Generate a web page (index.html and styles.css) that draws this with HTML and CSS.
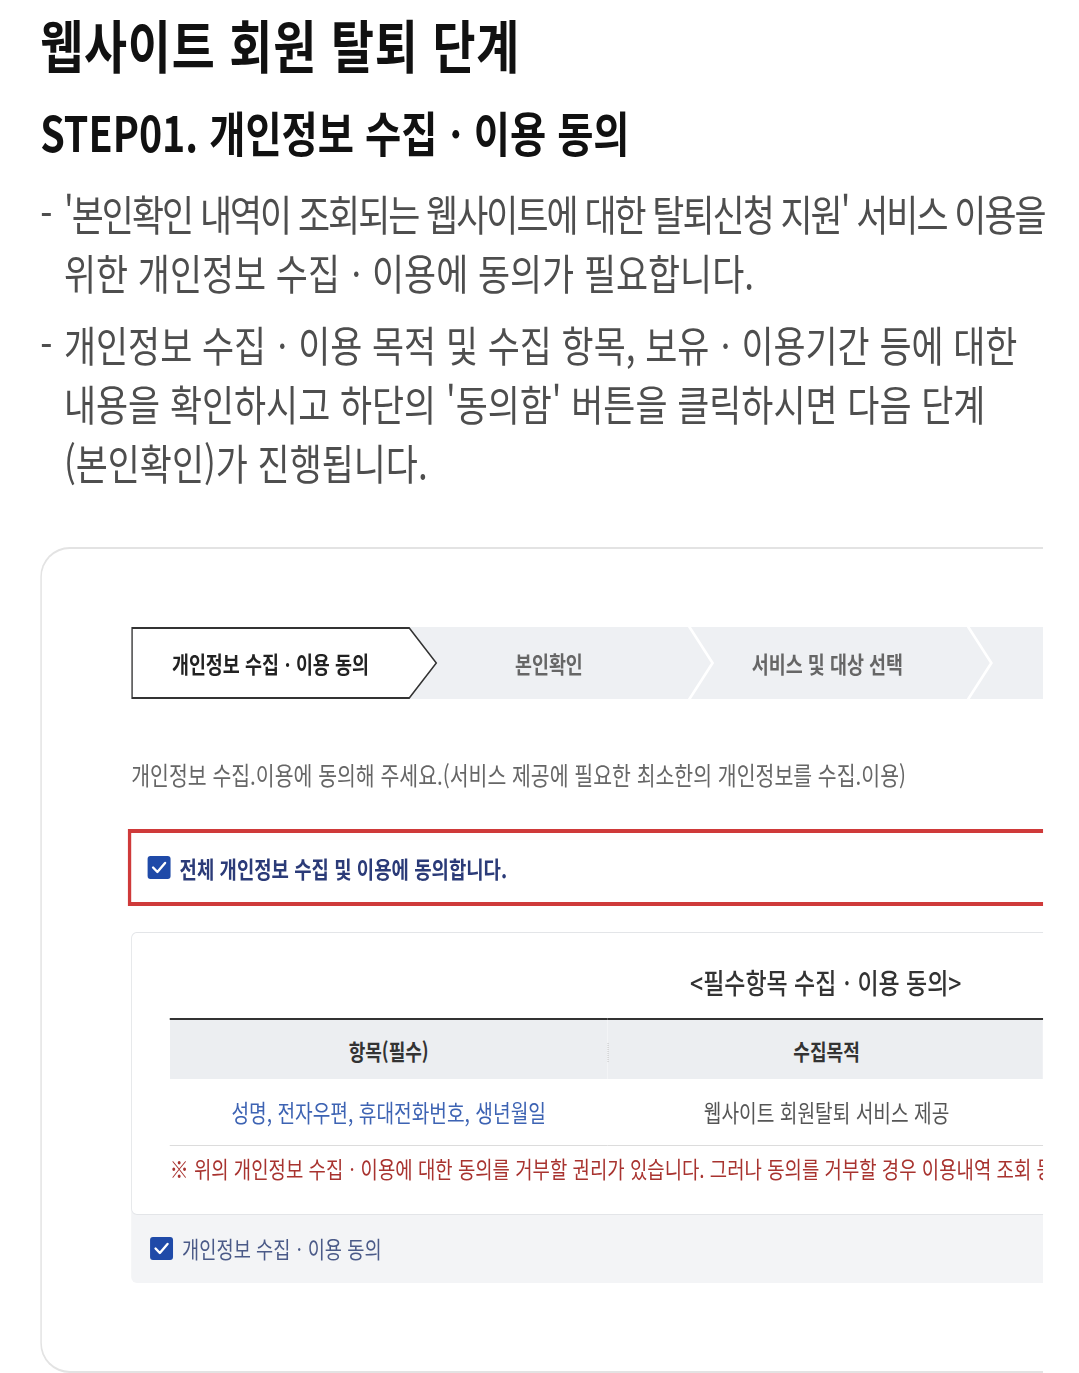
FILE: index.html
```html
<!DOCTYPE html>
<html lang="ko">
<head>
<meta charset="utf-8">
<title>웹사이트 회원 탈퇴 단계</title>
<link rel="stylesheet" href="styles.css">
</head>
<body>
<div class="viewport">
  <main class="page">
    <h1 class="title">웹사이트 회원 탈퇴 단계</h1>
    <h2 class="step-title">STEP01. 개인정보 수집ㆍ이용 동의</h2>
    <ul class="notes">
      <li><span class="dash">-</span><p><span class="tight">'본인확인 내역이 조회되는 웹사이트에 대한 탈퇴신청 지원' 서비스 이용을</span><br>위한 개인정보 수집ㆍ이용에 동의가 필요합니다.</p></li>
      <li><span class="dash">-</span><p>개인정보 수집ㆍ이용 목적 및 수집 항목, 보유ㆍ이용기간 등에 대한<br>내용을 확인하시고 하단의 '동의함' 버튼을 클릭하시면 다음 단계<br>(본인확인)가 진행됩니다.</p></li>
    </ul>

    <section class="shot">
      <div class="shot-inner">
        <ol class="steps">
          <li class="step active">
            <svg class="step-shape" width="374" height="72" viewBox="0 0 374 72"><path d="M1 1 H339 L372 36 L339 71 H1 Z" fill="#fff" stroke="#333" stroke-width="1.8"/></svg>
            <span>개인정보 수집ㆍ이용 동의</span>
          </li>
          <li class="step">
            <span>본인확인</span>
            <svg class="chev" width="32" height="72" viewBox="0 0 32 72"><polyline points="1,-1 30,36 1,73" fill="none" stroke="#fff" stroke-width="3"/></svg>
          </li>
          <li class="step">
            <span>서비스 및 대상 선택</span>
            <svg class="chev" width="32" height="72" viewBox="0 0 32 72"><polyline points="1,-1 30,36 1,73" fill="none" stroke="#fff" stroke-width="3"/></svg>
          </li>
          <li class="step"></li>
        </ol>

        <p class="guide">개인정보 수집.이용에 동의해 주세요.(서비스 제공에 필요한 최소한의 개인정보를 수집.이용)</p>

        <label class="allcheck">
          <span class="box"><svg width="28" height="23" viewBox="0 0 23 23" preserveAspectRatio="none"><polyline points="5.5,11.5 9.8,16 17.5,7" fill="none" stroke="#fff" stroke-width="2.4" stroke-linecap="round" stroke-linejoin="round"/></svg></span>
          <span class="allcheck-text">전체 개인정보 수집 및 이용에 동의합니다.</span>
        </label>

        <div class="consent">
          <div class="consent-card">
            <h3 class="consent-title">&lt;필수항목 수집ㆍ이용 동의&gt;</h3>
            <table class="consent-table">
              <thead>
                <tr><th>항목(필수)</th><th>수집목적</th></tr>
              </thead>
              <tbody>
                <tr><td class="items">성명, 전자우편, 휴대전화번호, 생년월일</td><td class="purpose">웹사이트 회원탈퇴 서비스 제공</td></tr>
              </tbody>
            </table>
            <p class="notice">※ 위의 개인정보 수집ㆍ이용에 대한 동의를 거부할 권리가 있습니다. 그러나 동의를 거부할 경우 이용내역 조회 등</p>
          </div>
          <label class="agree">
            <span class="box"><svg width="28" height="23" viewBox="0 0 23 23" preserveAspectRatio="none"><polyline points="5.5,11.5 9.8,16 17.5,7" fill="none" stroke="#fff" stroke-width="2.4" stroke-linecap="round" stroke-linejoin="round"/></svg></span>
            <span class="agree-text">개인정보 수집ㆍ이용 동의</span>
          </label>
        </div>
      </div>
    </section>
  </main>
</div>
</body>
</html>
```

FILE: styles.css
```css
* {
  box-sizing: border-box;
  margin: 0;
  padding: 0;
}

html, body {
  background: #fff;
}

body {
  font-family: "Noto Sans CJK KR", "Noto Sans", sans-serif;
  overflow: hidden;
}

.viewport {
  width: 1079px;
  height: 1373px;
  overflow: hidden;
}

/* the source capture is horizontally condensed */
.page {
  width: 1316px;
  transform: scaleX(0.82);
  transform-origin: 0 0;
  padding-left: 49px;
}

.title {
  font-size: 57px;
  font-weight: 700;
  line-height: 60px;
  letter-spacing: 1px;
  margin-top: 13px;
  color: #111;
}

.step-title {
  font-size: 48px;
  font-weight: 700;
  line-height: 60px;
  margin-top: 28px;
  color: #111;
}

.notes {
  list-style: none;
  margin-top: 22px;
  font-size: 42.5px;
  line-height: 59px;
  color: #4e4e4e;
}

.notes li {
  display: grid;
  grid-template-columns: 29px 1fr;
}

.notes li + li {
  margin-top: 13px;
}

.notes .tight {
  letter-spacing: -2.4px;
}

/* embedded screenshot card */
.shot {
  margin-top: 56px;
  width: 1223px;
  height: 826px;
  overflow: hidden;
  border: 2px solid #e3e3e3;
  border-right: 0;
  border-radius: 36px 0 0 36px / 30px 0 0 30px;
}

.shot-inner {
  width: 1800px;
  padding: 78px 0 0 109px;
}

.steps {
  list-style: none;
  display: flex;
  height: 72px;
  width: 1700px;
  background: #eef0f3;
}

.step {
  flex: 0 0 339.6px;
  position: relative;
  display: flex;
  align-items: center;
  justify-content: center;
  font-size: 22.5px;
  font-weight: 700;
  color: #666;
}

.step span {
  position: relative;
  z-index: 2;
}

.step.active {
  color: #222;
}

.step-shape {
  position: absolute;
  left: 0;
  top: 0;
  z-index: 1;
}

.chev {
  position: absolute;
  left: 100%;
  top: 0;
  z-index: 1;
}

.guide {
  margin-top: 60px;
  font-size: 25px;
  line-height: 30px;
  color: #666;
}

.allcheck {
  margin-top: 40px;
  margin-left: -4px;
  width: 1710px;
  height: 77px;
  border: 4px solid #cf3a3a;
  display: flex;
  align-items: center;
  padding-left: 20px;
  gap: 11px;
}

.box {
  width: 28px;
  height: 23px;
  background: #1f4aa8;
  border-radius: 3.5px / 3px;
  display: flex;
  flex: 0 0 auto;
}

.allcheck-text {
  font-size: 23px;
  font-weight: 700;
  color: #2b3b78;
}

.consent {
  margin-top: 26px;
  width: 1694px;
  background: #f3f4f6;
  border-radius: 7px / 6px;
}

.consent-card {
  background: #fff;
  border: 1px solid #e3e5e8;
  border-radius: 7px / 6px;
  padding: 0 46px 32px 46px;
}

.consent-title {
  text-align: center;
  padding-top: 32px;
  font-size: 28px;
  line-height: 34px;
  font-weight: 500;
  color: #333;
}

.consent-table {
  margin-top: 19px;
  width: 1068px;
  border-collapse: collapse;
  border-top: 2px solid #333;
  border-bottom: 1px solid #dcdcdc;
  table-layout: fixed;
}

.consent-table th {
  position: relative;
  height: 60px;
  background: #eceef1;
  font-size: 22px;
  font-weight: 700;
  color: #333;
}

.consent-table th + th::before {
  content: "";
  position: absolute;
  left: 0;
  top: 20px;
  height: 22px;
  border-left: 1px dotted #b9b9b9;
}

.consent-table td {
  height: 66px;
  text-align: center;
  font-size: 23.4px;
}

.consent-table .items {
  color: #3d63b3;
}

.consent-table .purpose {
  color: #555;
}

.notice {
  margin-top: 8px;
  font-size: 23px;
  line-height: 28px;
  color: #a8332f;
  white-space: nowrap;
}

.agree {
  height: 68px;
  display: flex;
  align-items: center;
  padding-left: 23px;
  gap: 11px;
}

.agree-text {
  font-size: 22.8px;
  color: #4b5a88;
}
```
